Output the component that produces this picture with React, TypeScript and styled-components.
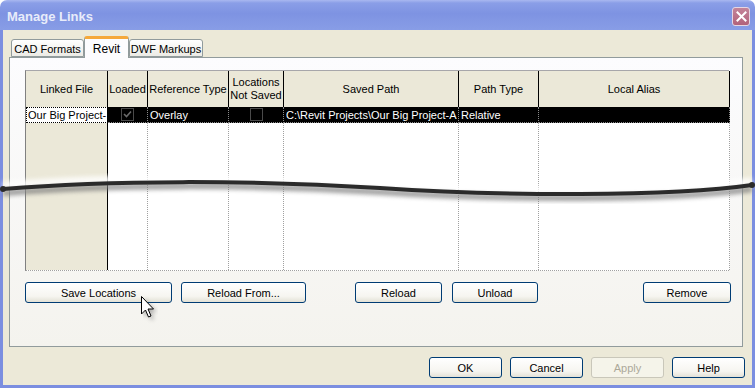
import styled, { createGlobalStyle } from "styled-components";

const Global = createGlobalStyle`
  html, body { margin: 0; padding: 0; }
  body { font-family: "Liberation Sans", Arial, sans-serif; font-size: 11px; color: #000; }
`;

const Window = styled.div`
  position: relative;
  width: 755px;
  height: 388px;
  display: flex;
  flex-direction: column;
  overflow: hidden;
`;

const TitleBar = styled.div`
  height: 30px;
  flex: none;
  display: flex;
  align-items: center;
  justify-content: space-between;
  padding: 0 7px 0 7px;
  box-sizing: border-box;
  border-radius: 7px 7px 0 0;
  background: linear-gradient(#a9b8f0 0, #8a9ee7 3px, #7e93e2 45%, #889de6 100%);
`;

const Title = styled.span`
  font-family: "Liberation Sans", Arial, sans-serif;
  font-weight: bold;
  font-size: 13px;
  color: #e8ecfa;
  margin-top: 2px;
`;

const CloseBtn = styled.div`
  width: 18px;
  height: 19px;
  box-sizing: border-box;
  border: 1px solid #e6d6e2;
  border-radius: 3px;
  background: linear-gradient(#c38499, #b2627b);
  display: flex;
  align-items: center;
  justify-content: center;
  margin-top: 2px;
  margin-right: -2px;
`;

const Frame = styled.div`
  flex: 1;
  display: flex;
  flex-direction: column;
  background: #ece9d8;
  border: 3px solid #7b8ee0;
  border-top: none;
  padding: 6px 0 7px 0;
`;

const TabRow = styled.div`
  height: 21px;
  display: flex;
  align-items: flex-end;
  padding-left: 8px;
  position: relative;
  z-index: 1;
`;

const Tab = styled.div<{ $active?: boolean; $w: number }>`
  width: ${(p) => p.$w}px;
  box-sizing: border-box;
  height: ${(p) => (p.$active ? 22 : 18)}px;
  margin-bottom: ${(p) => (p.$active ? -1 : 0)}px;
  display: flex;
  align-items: center;
  justify-content: center;
  padding-top: ${(p) => (p.$active ? 0 : 1)}px;
  border: 1px solid #919b9c;
  border-bottom: ${(p) => (p.$active ? "none" : "1px solid #919b9c")};
  border-top: ${(p) => (p.$active ? "3px solid #f5a83a" : "1px solid #919b9c")};
  border-radius: 3px 3px 0 0;
  background: ${(p) => (p.$active ? "#fcfcfe" : "linear-gradient(#ffffff, #ecebe5)")};
  font-size: ${(p) => (p.$active ? 12 : 11)}px;
`;

const Panel = styled.div`
  margin-left: 6px;
  width: 734px;
  height: 290px;
  box-sizing: border-box;
  border: 1px solid #919b9c;
  background: linear-gradient(#fcfcfe, #f4f3ee);
  padding: 12px 0 0 15px;
  display: flex;
  flex-direction: column;
`;

const Grid = styled.div`
  width: 704px;
  height: 201px;
  box-sizing: border-box;
  display: grid;
  grid-template-columns: 82px 40px 81px 55px 175px 80px 191px;
  grid-template-rows: 36px 16px 1fr;
  border-top: 1px solid #a7a6aa;
  border-left: 1px solid #808080;
  border-bottom: 1px dotted #a0a0a0;
  background: #fff;
`;

const HeadCell = styled.div`
  background: #ebe8d8;
  border-right: 1px solid #000;
  display: flex;
  align-items: center;
  justify-content: center;
  text-align: center;
  line-height: 13px;
  white-space: nowrap;
`;

const RowCell = styled.div<{ $center?: boolean }>`
  background: #000;
  color: #fff;
  border-right: 1px dotted #8a8a8a;
  border-bottom: 1px dotted #8a8a8a;
  display: flex;
  align-items: center;
  justify-content: ${(p) => (p.$center ? "center" : "flex-start")};
  padding-left: ${(p) => (p.$center ? 0 : 2)}px;
  white-space: nowrap;
  overflow: hidden;
`;

const FocusCell = styled.div`
  background: #fff;
  color: #000;
  border: 1px dotted #000;
  border-right: 1px solid #000;
  display: flex;
  align-items: center;
  padding-left: 1px;
  white-space: nowrap;
  overflow: hidden;
`;

const Filler = styled.div<{ $head?: boolean }>`
  background: ${(p) => (p.$head ? "#ebe8d8" : "#fff")};
  border-right: ${(p) => (p.$head ? "1px solid #000" : "1px dotted #a0a0a0")};
`;

const Check = styled.div`
  width: 13px;
  height: 13px;
  box-sizing: border-box;
  border: 1px solid #4a4a4a;
  display: flex;
  align-items: center;
  justify-content: center;
`;

const ButtonRow = styled.div`
  display: flex;
  margin-top: 11px;
`;

const Button = styled.div<{ $w: number; $gap?: number; $disabled?: boolean }>`
  width: ${(p) => p.$w}px;
  height: 21px;
  margin-left: ${(p) => p.$gap ?? 0}px;
  box-sizing: border-box;
  border: 1px solid ${(p) => (p.$disabled ? "#c9c7ba" : "#003c74")};
  border-radius: 3px;
  background: ${(p) =>
    p.$disabled ? "#f5f4ea" : "linear-gradient(#ffffff 0%, #f6f5f0 70%, #e3e1d6 100%)"};
  color: ${(p) => (p.$disabled ? "#aca899" : "#000")};
  display: flex;
  align-items: center;
  justify-content: center;
  font-size: 11px;
`;

const FooterRow = styled.div`
  display: flex;
  justify-content: flex-end;
  gap: 8px;
  margin-top: 10px;
  padding-right: 7px;
`;

const Overlay = styled.svg`
  position: absolute;
  left: 0;
  top: 0;
  pointer-events: none;
`;

const columns = ["Linked File", "Loaded", "Reference Type", "", "Saved Path", "Path Type", "Local Alias"];
const breakPath = "M3 189 C 110 180 250 180 380 188 C 500 196 670 197 752 185";

export default function App() {
  return (
    <Window>
      <Global />
      <TitleBar>
        <Title>Manage Links</Title>
        <CloseBtn>
          <svg width="11" height="11" viewBox="0 0 11 11">
            <path d="M1.5 1.5 L9.5 9.5 M9.5 1.5 L1.5 9.5" stroke="#fff" strokeWidth="2" strokeLinecap="square" />
          </svg>
        </CloseBtn>
      </TitleBar>
      <Frame>
        <TabRow>
          <Tab $w={73}>CAD Formats</Tab>
          <Tab $w={45} $active>Revit</Tab>
          <Tab $w={74}>DWF Markups</Tab>
        </TabRow>
        <Panel>
          <Grid>
            {columns.map((c, i) => (
              <HeadCell key={i}>
                {i === 3 ? (
                  <span>
                    Locations
                    <br />
                    Not Saved
                  </span>
                ) : (
                  c
                )}
              </HeadCell>
            ))}
            <FocusCell>Our Big Project-</FocusCell>
            <RowCell $center>
              <Check>
                <svg width="9" height="9" viewBox="0 0 9 9">
                  <path d="M1 4 L3.5 6.5 L8 1.5" stroke="#6a6a6a" strokeWidth="1.6" fill="none" />
                </svg>
              </Check>
            </RowCell>
            <RowCell>Overlay</RowCell>
            <RowCell $center>
              <Check />
            </RowCell>
            <RowCell>C:\Revit Projects\Our Big Project-A</RowCell>
            <RowCell>Relative</RowCell>
            <RowCell />
            <Filler $head />
            <Filler />
            <Filler />
            <Filler />
            <Filler />
            <Filler />
            <Filler />
          </Grid>
          <ButtonRow>
            <Button $w={147}>Save Locations</Button>
            <Button $w={125} $gap={9}>Reload From...</Button>
            <Button $w={87} $gap={49}>Reload</Button>
            <Button $w={86} $gap={10}>Unload</Button>
            <Button $w={88} $gap={105}>Remove</Button>
          </ButtonRow>
        </Panel>
        <FooterRow>
          <Button $w={73}>OK</Button>
          <Button $w={73}>Cancel</Button>
          <Button $w={73} $disabled>Apply</Button>
          <Button $w={73}>Help</Button>
        </FooterRow>
      </Frame>

      <Overlay width="755" height="388" viewBox="0 0 755 388">
        <defs>
          <filter id="sh" x="-5%" y="-50%" width="110%" height="200%">
            <feGaussianBlur stdDeviation="2" />
          </filter>
        </defs>
        <path d={breakPath} stroke="#ffffff" strokeWidth="9" fill="none" opacity="0.8" transform="translate(0 -3)" filter="url(#sh)" />
        <path d={breakPath} stroke="#777" strokeWidth="6" fill="none" opacity="0.7" transform="translate(0 4)" filter="url(#sh)" />
        <path d={breakPath} stroke="#2b2b2b" strokeWidth="4" fill="none" />
        <circle cx="3" cy="189" r="3" fill="#2b2b2b" />
        <circle cx="752" cy="185" r="3" fill="#2b2b2b" />

        <g transform="translate(141 296)">
          <path d="M3 3 L3 21 L7 17 L10 24 L13 23 L10 16 L16 16 Z" fill="#555" opacity="0.45" filter="url(#sh)" />
          <path
            d="M0.5 0.5 L0.5 18 L4.5 14 L7.5 21 L10 20 L7 13 L12.5 13 Z"
            fill="#fff"
            stroke="#000"
            strokeWidth="1"
            strokeLinejoin="miter"
          />
        </g>
      </Overlay>
    </Window>
  );
}
